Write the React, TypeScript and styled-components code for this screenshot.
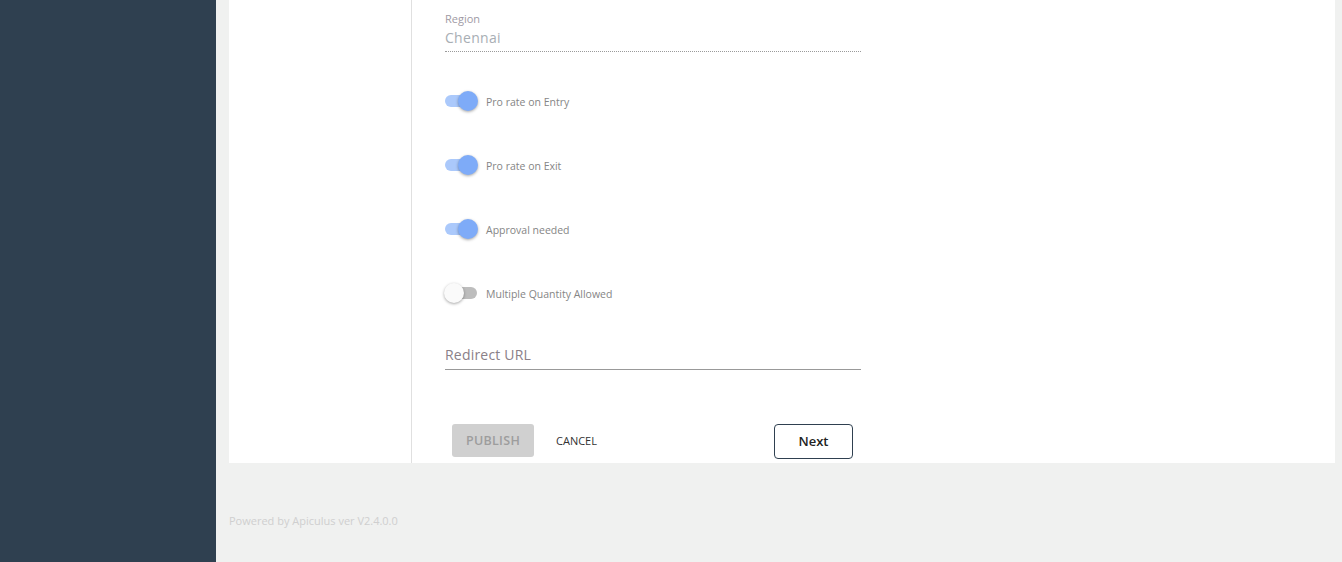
import React, { useState } from 'react'
import styled, { createGlobalStyle } from 'styled-components'

const GlobalStyle = createGlobalStyle`
  html, body {
    margin: 0;
    padding: 0;
    font-family: "Open Sans", "Liberation Sans", sans-serif;
    background: #f0f1f0;
  }
  * {
    box-sizing: border-box;
  }
`

const Layout = styled.div`
  display: flex;
  height: 562px;
  overflow: hidden;
`

const Sidebar = styled.div`
  width: 216px;
  flex-shrink: 0;
  background: #2f4050;
`

const Main = styled.div`
  flex: 1;
  display: flex;
  flex-direction: column;
  padding: 0 7px 0 13px;
  background: #f0f1f0;
`

const Card = styled.div`
  height: 463px;
  background: #fff;
  display: flex;
`

const SideCol = styled.div`
  width: 183px;
  flex-shrink: 0;
  border-right: 1px solid #e0e0e0;
`

const FormCol = styled.div`
  padding-left: 33px;
  width: 449px;
  display: flex;
  flex-direction: column;
`

const ReadField = styled.div`
  padding-top: 12px;
  padding-bottom: 3px;
  border-bottom: 1px dotted #9a9a9a;
`

const FieldLabel = styled.div`
  font-size: 11px;
  line-height: 14px;
  color: #a09aa4;
  margin-bottom: 2px;
`

const FieldValue = styled.div`
  font-size: 14px;
  line-height: 20px;
  color: #a8aeb4;
  letter-spacing: 0.3px;
`

const ToggleList = styled.div`
  margin-top: 17px;
  display: flex;
  flex-direction: column;
`

const ToggleRow = styled.label`
  height: 64px;
  display: flex;
  align-items: center;
  gap: 9px;
  cursor: pointer;
`

const Track = styled.span<{ $on: boolean }>`
  position: relative;
  width: 32px;
  height: 12px;
  border-radius: 6px;
  background: ${(p) => (p.$on ? '#abc9fb' : '#bdbdbd')};
  flex-shrink: 0;
`

const Thumb = styled.span<{ $on: boolean }>`
  position: absolute;
  top: -4px;
  left: ${(p) => (p.$on ? '13px' : '-1px')};
  width: 20px;
  height: 20px;
  border-radius: 50%;
  background: ${(p) => (p.$on ? '#7eabf8' : '#fafafa')};
  box-shadow: 0 1px 3px rgba(0, 0, 0, 0.35);
`

const ToggleText = styled.span`
  font-size: 10.5px;
  line-height: 14px;
  padding-top: 2px;
  color: #858585;
`

const UrlInput = styled.input`
  margin-top: 19px;
  width: 416px;
  border: none;
  border-bottom: 1px solid #999;
  padding: 0 0 5px 0;
  font-family: inherit;
  font-size: 14px;
  letter-spacing: 0.2px;
  line-height: 20px;
  height: 26px;
  color: #555;
  outline: none;
  background: transparent;
  &::placeholder {
    color: #8a8088;
  }
`

const ButtonRow = styled.div`
  margin-top: 54px;
  display: flex;
  align-items: flex-start;
  width: 416px;
  padding-left: 7px;
`

const PublishButton = styled.button`
  width: 82px;
  height: 33px;
  border: none;
  border-radius: 3px;
  background: #d0d0d0;
  color: #9d9d9d;
  font-family: inherit;
  font-size: 12.5px;
  font-weight: 600;
  letter-spacing: 0.3px;
`

const CancelButton = styled.button`
  margin-left: 14px;
  border: none;
  background: transparent;
  font-family: inherit;
  font-size: 11px;
  color: #333;
  padding: 0 8px;
  height: 33px;
`

const NextButton = styled.button`
  margin-left: auto;
  margin-right: 8px;
  width: 79px;
  height: 35px;
  border: 1px solid #2f4050;
  border-radius: 4px;
  background: #fff;
  font-family: inherit;
  font-size: 13px;
  font-weight: 600;
  color: #222;
  padding-bottom: 2px;
`

const Footer = styled.div`
  padding-top: 51px;
  font-size: 11px;
  line-height: 14px;
  color: #cfcfcf;
`

const toggles = [
  { label: 'Pro rate on Entry', on: true },
  { label: 'Pro rate on Exit', on: true },
  { label: 'Approval needed', on: true },
  { label: 'Multiple Quantity Allowed', on: false },
]

const App = () => {
  const [state, setState] = useState(toggles.map((t) => t.on))

  const flip = (i: number) => {
    setState((s) => s.map((v, j) => (j === i ? !v : v)))
  }

  return (
    <Layout>
      <GlobalStyle />
      <Sidebar />
      <Main>
        <Card>
          <SideCol />
          <FormCol>
            <ReadField>
              <FieldLabel>Region</FieldLabel>
              <FieldValue>Chennai</FieldValue>
            </ReadField>
            <ToggleList>
              {toggles.map((t, i) => (
                <ToggleRow key={t.label} onClick={() => flip(i)}>
                  <Track $on={state[i]}>
                    <Thumb $on={state[i]} />
                  </Track>
                  <ToggleText>{t.label}</ToggleText>
                </ToggleRow>
              ))}
            </ToggleList>
            <UrlInput placeholder="Redirect URL" />
            <ButtonRow>
              <PublishButton>PUBLISH</PublishButton>
              <CancelButton>CANCEL</CancelButton>
              <NextButton>Next</NextButton>
            </ButtonRow>
          </FormCol>
        </Card>
        <Footer>Powered by Apiculus ver V2.4.0.0</Footer>
      </Main>
    </Layout>
  )
}

export default App
